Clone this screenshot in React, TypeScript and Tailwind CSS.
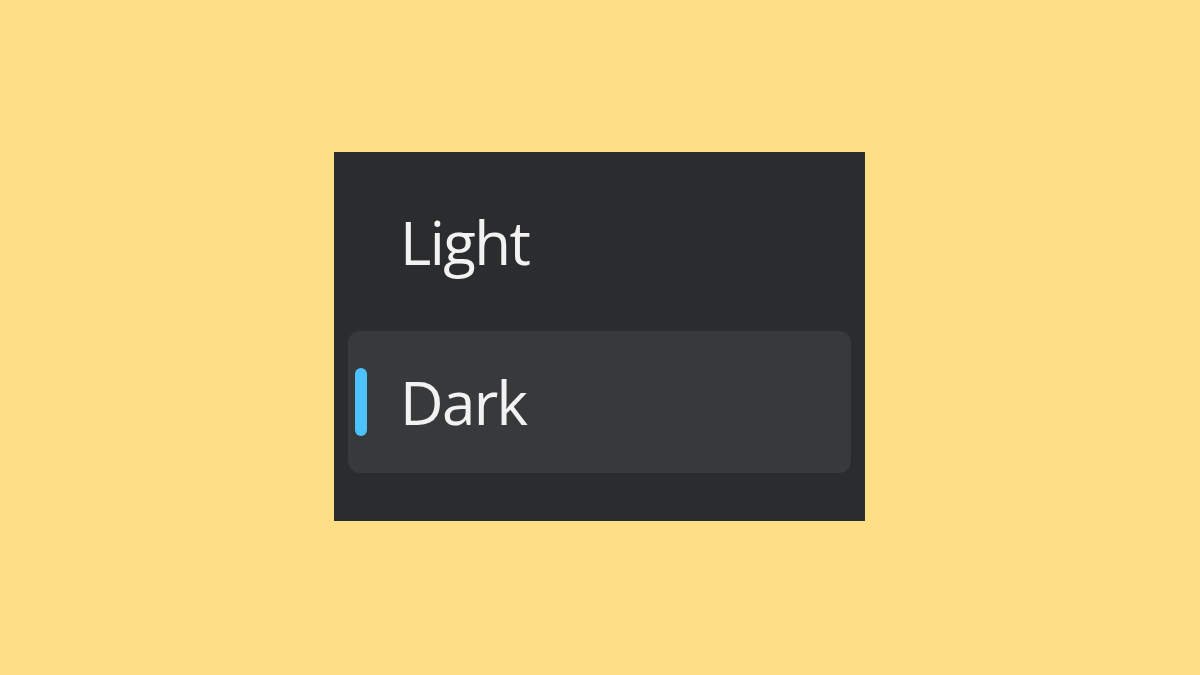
export default function App() {
  return (
    <div className="w-[1200px] h-[675px] bg-[#ffdf85] pl-[334px] pt-[152px]">
      <div
        className="w-[531px] h-[369px] bg-[#2b2c2e] flex flex-col"
        style={{ fontFamily: '"Open Sans", "Noto Sans", sans-serif' }}
      >
        <div className="h-[179px] flex items-center pl-[66px]">
          <span className="text-[60px] leading-none text-[#f2f2f2] tracking-[-1.6px]">Light</span>
        </div>
        <div className="mx-[14px] h-[142px] rounded-[12px] bg-[#38393b] flex items-center relative pl-[52px]">
          <div className="absolute left-[7px] top-[37px] w-[12px] h-[68px] rounded-full bg-[#4cc2ff]" />
          <span className="text-[60px] leading-none text-[#f2f2f2] tracking-[-1.6px]">Dark</span>
        </div>
      </div>
    </div>
  );
}
